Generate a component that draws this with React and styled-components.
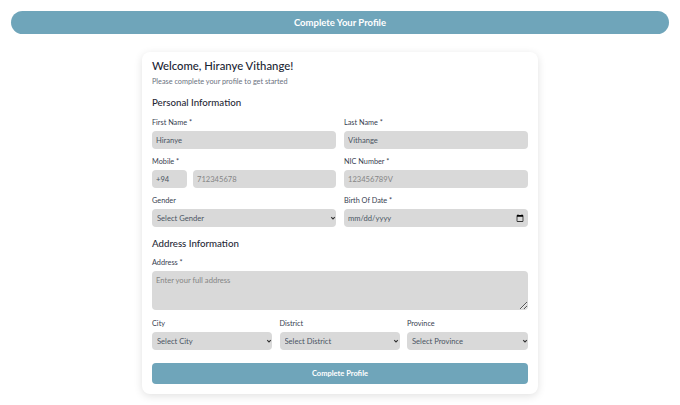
import React from "react";
import styled, { createGlobalStyle } from "styled-components";

const GlobalStyle = createGlobalStyle`
  * {
    box-sizing: border-box;
  }
  body {
    margin: 0;
    background: #fff;
    font-family: "Lato", "Noto Sans", sans-serif;
  }
`;

function SelectBox({ text }) {
  return (
    <SelectWrap>
      <Select>
        <option>{text}</option>
      </Select>
      <Chevron viewBox="0 0 6 6">
        <path d="M1.2 2.2 L3 4 L4.8 2.2" />
      </Chevron>
    </SelectWrap>
  );
}

function App() {
  return (
    <Page>
      <GlobalStyle />
      <Banner>Complete Your Profile</Banner>

      <Card>
        <Title>Welcome, Hiranye Vithange!</Title>
        <Subtitle>Please complete your profile to get started</Subtitle>

        <SectionTitle>Personal Information</SectionTitle>
        <TwoCols>
          <Field>
            <Label>First Name *</Label>
            <Input defaultValue="Hiranye" />
          </Field>
          <Field>
            <Label>Last Name *</Label>
            <Input defaultValue="Vithange" />
          </Field>
          <Field>
            <Label>Mobile *</Label>
            <PhoneRow>
              <Input defaultValue="+94" />
              <Input placeholder="712345678" />
            </PhoneRow>
          </Field>
          <Field>
            <Label>NIC Number *</Label>
            <Input placeholder="123456789V" />
          </Field>
          <Field>
            <Label>Gender</Label>
            <SelectBox text="Select Gender" />
          </Field>
          <Field>
            <Label>Birth Of Date *</Label>
            <Input type="date" />
          </Field>
        </TwoCols>

        <SectionTitle $address>Address Information</SectionTitle>
        <Field>
          <Label>Address *</Label>
          <TextArea placeholder="Enter your full address" />
        </Field>
        <ThreeCols>
          <Field>
            <Label>City</Label>
            <SelectBox text="Select City" />
          </Field>
          <Field>
            <Label>District</Label>
            <SelectBox text="Select District" />
          </Field>
          <Field>
            <Label>Province</Label>
            <SelectBox text="Select Province" />
          </Field>
        </ThreeCols>

        <SubmitButton>Complete Profile</SubmitButton>
      </Card>
    </Page>
  );
}

export default App;

const Page = styled.div`
  width: 680px;
  height: 405px;
  padding: 11px 11px 0;
  overflow: hidden;
`;

const Banner = styled.div`
  height: 23px;
  border-radius: 12px;
  background: #6fa5ba;
  color: #fff;
  font-size: 9.5px;
  font-weight: 700;
  display: flex;
  align-items: center;
  justify-content: center;
`;

const Card = styled.div`
  width: 396px;
  height: 342px;
  margin: 18px auto 0;
  padding: 6px 10px 10px;
  background: #fff;
  border-radius: 8px;
  box-shadow: 0 2px 8px rgba(0, 0, 0, 0.12);
`;

const Title = styled.h1`
  margin: 0;
  height: 15px;
  line-height: 15px;
  font-size: 11.3px;
  font-weight: 500;
  color: #1a2433;
`;

const Subtitle = styled.p`
  margin: 4px 0 0;
  height: 10px;
  line-height: 10px;
  font-size: 7.3px;
  color: #6b7280;
`;

const SectionTitle = styled.h2`
  margin: ${(props) => (props.$address ? "10px 0 9px" : "9px 0 10px")};
  height: 12px;
  line-height: 12px;
  font-size: 9.7px;
  font-weight: 500;
  color: #1f2937;
`;

const TwoCols = styled.div`
  display: grid;
  grid-template-columns: 184px 184px;
  column-gap: 8px;
  row-gap: 8px;
`;

const ThreeCols = styled.div`
  display: grid;
  grid-template-columns: 120px 120px 121px;
  column-gap: 7.5px;
  margin-top: 9px;
`;

const Field = styled.div`
  display: flex;
  flex-direction: column;
  min-width: 0;
`;

const Label = styled.label`
  height: 10px;
  line-height: 10px;
  margin-bottom: 3px;
  font-size: 7.3px;
  color: #374151;
`;

const PhoneRow = styled.div`
  display: grid;
  grid-template-columns: 35px 143px;
  column-gap: 6px;
`;

const Input = styled.input`
  width: 100%;
  height: 18px;
  padding: 0 4px;
  border: none;
  border-radius: 4px;
  background: #d9d9d9;
  color: #4b5563;
  font-family: inherit;
  font-size: 7.6px;
  outline: none;

  &::placeholder {
    color: #858585;
  }
  &::-webkit-calendar-picker-indicator {
    width: 8px;
    height: 8px;
    margin: 0;
    padding: 0;
  }
  &::-webkit-datetime-edit,
  &::-webkit-datetime-edit-fields-wrapper,
  &::-webkit-datetime-edit-text,
  &::-webkit-datetime-edit-month-field,
  &::-webkit-datetime-edit-day-field,
  &::-webkit-datetime-edit-year-field {
    padding: 0;
  }
`;

const SelectWrap = styled.div`
  position: relative;
  height: 18px;
`;

const Select = styled.select`
  appearance: none;
  display: block;
  width: 100%;
  height: 18px;
  padding: 0 10px 0 5px;
  border: none;
  border-radius: 4px;
  background: #d9d9d9;
  color: #4b5563;
  font-family: inherit;
  font-size: 7.6px;
  outline: none;
`;

const Chevron = styled.svg`
  position: absolute;
  top: 6px;
  right: 0.5px;
  width: 6px;
  height: 6px;
  fill: none;
  stroke: #333;
  stroke-width: 1.1;
  pointer-events: none;
`;

const TextArea = styled.textarea`
  display: block;
  width: 100%;
  height: 39px;
  padding: 4px;
  border: none;
  border-radius: 4px;
  background: #d9d9d9;
  color: #4b5563;
  font-family: inherit;
  font-size: 7.6px;
  outline: none;

  &::placeholder {
    color: #858585;
  }
`;

const SubmitButton = styled.button`
  display: block;
  width: 100%;
  height: 21px;
  margin-top: 13px;
  border: none;
  border-radius: 4px;
  background: #6fa5ba;
  color: #fff;
  font-family: inherit;
  font-size: 7.5px;
  font-weight: 700;
`;
